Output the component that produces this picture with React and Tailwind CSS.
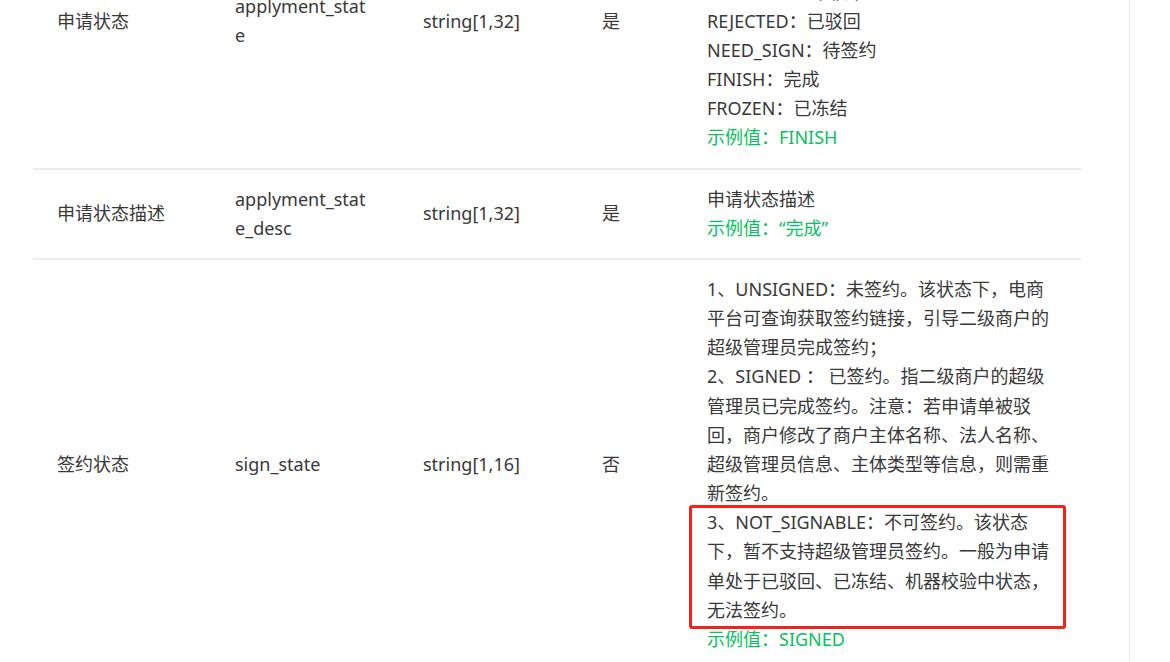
import React from 'react';

const rows = [
  {
    name: '申请状态',
    field: ['applyment_stat', 'e'],
    type: 'string[1,32]',
    required: '是',
    desc: [
      '枚举值：',
      'CHECKING：资料校验中',
      'ACCOUNT_NEED_VERIFY：待账户验证',
      'AUDITING：审核中',
      'REJECTED：已驳回',
      'NEED_SIGN：待签约',
      'FINISH：完成',
      'FROZEN：已冻结',
    ],
    example: '示例值：FINISH',
  },
  {
    name: '申请状态描述',
    field: ['applyment_stat', 'e_desc'],
    type: 'string[1,32]',
    required: '是',
    desc: ['申请状态描述'],
    example: '示例值：“完成”',
  },
  {
    name: '签约状态',
    field: ['sign_state'],
    type: 'string[1,16]',
    required: '否',
    desc: [
      '1、UNSIGNED：未签约。该状态下，电商',
      '平台可查询获取签约链接，引导二级商户的',
      '超级管理员完成签约；',
      '2、SIGNED ： 已签约。指二级商户的超级',
      '管理员已完成签约。注意：若申请单被驳',
      '回，商户修改了商户主体名称、法人名称、',
      '超级管理员信息、主体类型等信息，则需重',
      '新签约。',
    ],
    marked: [
      '3、NOT_SIGNABLE：不可签约。该状态',
      '下，暂不支持超级管理员签约。一般为申请',
      '单处于已驳回、已冻结、机器校验中状态，',
      '无法签约。',
    ],
    example: '示例值：SIGNED',
  },
];

function Lines({ items }) {
  return items.map((t, i) => (
    <div key={i} className="whitespace-nowrap">
      {t}
    </div>
  ));
}

export default function App() {
  return (
    <div className="h-[662px] overflow-hidden bg-white flex font-['Noto_Sans','Noto_Sans_CJK_SC',sans-serif] text-[18px] leading-[29.17px] text-[#383838]">
      <div className="w-[1129px] shrink-0 pl-[33px]">
        <div className="w-[1048px] -mt-[125px]">
          {rows.map((r, i) => (
            <div
              key={i}
              className="grid grid-cols-[178px_188px_179px_105px_398px] items-center border-b-2 border-[#ebebeb] py-[15px]"
            >
              <div className="px-6">{r.name}</div>
              <div className="px-6">
                <Lines items={r.field} />
              </div>
              <div className="px-6">{r.type}</div>
              <div className="px-6">{r.required}</div>
              <div className="px-6">
                <Lines items={r.desc} />
                {r.marked && (
                  <div className="relative">
                    <Lines items={r.marked} />
                    <span className="absolute -left-[18px] -right-[9px] -top-[3px] -bottom-[4px] border-[3px] border-[#f5221b] rounded-[3px]" />
                  </div>
                )}
                <div className="text-[#07c160] whitespace-nowrap">{r.example}</div>
              </div>
            </div>
          ))}
        </div>
      </div>
      <div className="flex-1 border-l border-[#ececec]" />
    </div>
  );
}
